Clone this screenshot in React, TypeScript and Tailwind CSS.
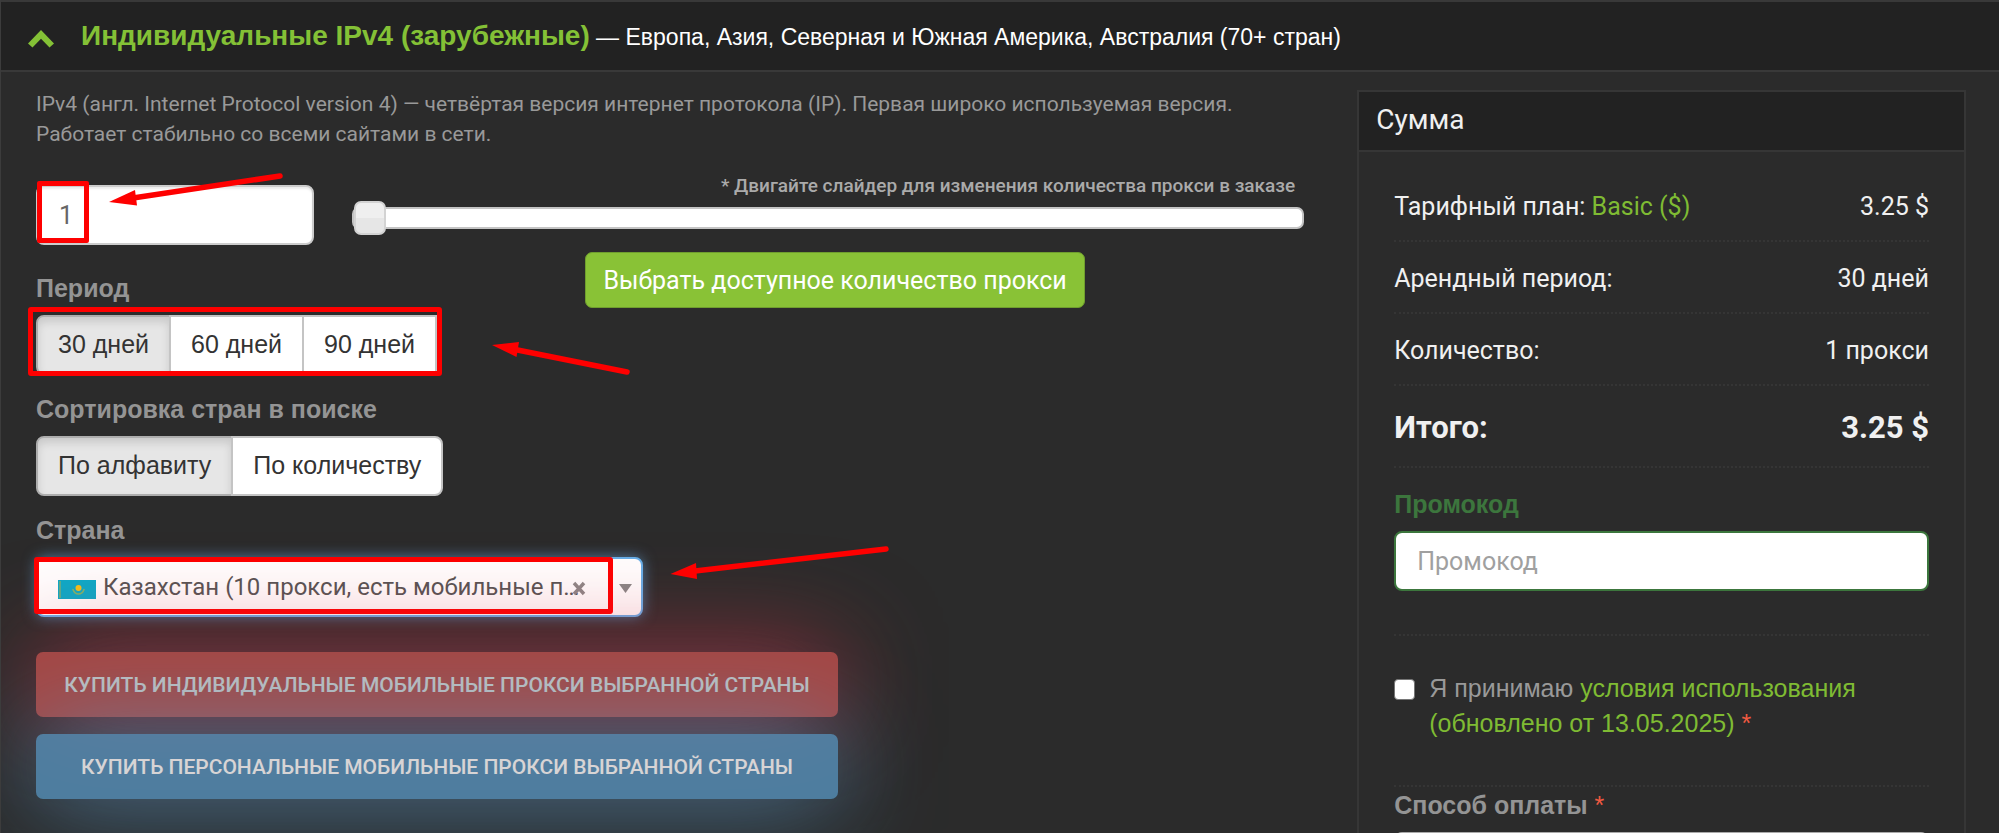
import { useState, type ReactNode } from "react";

function FieldLabel({ htmlFor, children }: { htmlFor?: string; children: ReactNode }) {
  return (
    <label
      htmlFor={htmlFor}
      className="mb-[13px] block whitespace-nowrap font-['Liberation_Sans',sans-serif] text-[25px] leading-7 font-bold text-[#949494]"
    >
      {children}
    </label>
  );
}

function SegmentedControl({
  label,
  options,
  marked = false,
}: {
  label: string;
  options: string[];
  marked?: boolean;
}) {
  const [active, setActive] = useState(options[0]);
  return (
    <div role="group" aria-label={label} className="relative flex w-max">
      {options.map((option) => (
        <button
          key={option}
          type="button"
          aria-pressed={option === active}
          onClick={() => setActive(option)}
          className="-ml-[2px] h-[60px] border-2 border-[#c4c4c4] bg-white px-5 pb-[2px] font-['Liberation_Sans',sans-serif] text-[25px] leading-7 text-[#333] first:ml-0 first:rounded-l-[8px] last:rounded-r-[8px] aria-pressed:border-[#adadad] aria-pressed:bg-[#e6e6e6] aria-pressed:shadow-[inset_0_5px_9px_rgba(0,0,0,0.125)]"
        >
          {option}
        </button>
      ))}
      {marked && (
        <span className="pointer-events-none absolute -top-2 -right-[5px] -bottom-[1px] -left-2 rounded-[3px] border-[5px] border-[#fe0000]" />
      )}
    </div>
  );
}

function FlagKazakhstan() {
  return (
    <svg viewBox="0 0 38 19" className="h-[19px] w-[38px]" aria-hidden="true">
      <rect width="38" height="19" fill="#0aabc9" />
      <rect x="1" y="1" width="2" height="17" fill="#5cae8c" />
      <circle cx="20.5" cy="8" r="3" fill="#f5c21b" />
      <path
        d="M15 9.500c1 3 3 4.500 5.500 4.500s4.500-1.500 5.500-4.500"
        fill="none"
        stroke="#7fb56b"
        strokeWidth="1.600"
        strokeLinecap="round"
      />
    </svg>
  );
}

function SummaryRow({ name, value }: { name: ReactNode; value: string }) {
  return (
    <div className="flex h-[72px] items-center justify-between border-b-2 border-dotted border-[#353535] pt-[3px]">
      <dt>{name}</dt>
      <dd>{value}</dd>
    </div>
  );
}

function PointerArrows() {
  return (
    <svg
      viewBox="0 0 900 600"
      className="pointer-events-none absolute top-0 left-0 h-[600px] w-[900px]"
      aria-hidden="true"
      fill="#fe0000"
      stroke="#fe0000"
      strokeLinecap="round"
    >
      <path d="M279 176L132 198" strokeWidth="5.500" />
      <path d="M108 202L134 190L136 205.500Z" stroke="none" />
      <path d="M626 372L514 349.500" strokeWidth="5.500" />
      <path d="M491 345L518 342L515.500 357Z" stroke="none" />
      <path d="M885 549L694 571" strokeWidth="5.500" />
      <path d="M669.500 574L695 563L696 579Z" stroke="none" />
    </svg>
  );
}

export default function App() {
  const [count, setCount] = useState(1);

  return (
    <div className="relative h-screen overflow-hidden border-l border-[#3c3c3c] bg-[#2b2b2b] font-['Roboto',sans-serif] text-[25px] leading-[30px] text-[#999]">
      <header className="flex h-[72px] items-center border-y-2 border-[#393939] bg-[#222] pl-[27px] font-['Liberation_Sans',sans-serif]">
        <button type="button" aria-label="Свернуть" className="mt-[5px] mr-[27px] w-[26px]">
          <svg viewBox="0 0 26 18" className="h-[18px] w-[26px]" aria-hidden="true">
            <path d="M13 0L26 13.500L21.500 17.500L13 8.800L4.500 17.500L0 13.500Z" fill="#84c136" />
          </svg>
        </button>
        <h1 className="text-[23px] leading-8 whitespace-nowrap text-white">
          <strong className="text-[28px] font-bold text-[#84c136]">Индивидуальные IPv4 (зарубежные)</strong> — Европа,
          Азия, Северная и Южная Америка, Австралия (70+ стран)
        </h1>
      </header>

      <main className="grid grid-cols-[minmax(0,25fr)_minmax(0,12fr)] items-start gap-x-[53px] pr-[33px] pl-[35px]">
        <form className="pt-[17px]">
          <p className="text-[21px] leading-[30px]">
            IPv4 (англ. Internet Protocol version 4) — четвёртая версия интернет протокола (IP). Первая широко
            используемая версия.
            <br />
            Работает стабильно со всеми сайтами в сети.
          </p>

          <div className="mt-6 flex items-start gap-[38px]">
            <div className="w-[278px] shrink-0 pt-3">
              <div className="relative mb-[29px]">
                <input
                  type="text"
                  aria-label="Количество прокси"
                  value={count}
                  onChange={(e) => setCount(Number(e.target.value) || 1)}
                  className="block h-[60px] w-full rounded-[8px] border-2 border-[#ccc] bg-white px-[21px] text-[25px] text-[#666] shadow-[inset_0_2px_2px_rgba(0,0,0,0.075)]"
                />
                <span className="pointer-events-none absolute -top-1 left-[1px] h-[62px] w-[52px] rounded-[2px] border-[5px] border-[#fe0000]" />
              </div>
              <FieldLabel>Период</FieldLabel>
              <SegmentedControl label="Период" options={["30 дней", "60 дней", "90 дней"]} marked />
            </div>

            <div className="flex min-w-0 flex-1 flex-col">
              <label
                htmlFor="amount"
                className="pr-[9px] text-right text-[19px] leading-[26px] font-medium text-[#aaa]"
              >
                * Двигайте слайдер для изменения количества прокси в заказе
              </label>
              <input
                id="amount"
                type="range"
                min={1}
                max={100}
                value={count}
                onChange={(e) => setCount(Number(e.target.value))}
                className="mt-[2px] block h-[34px] w-full appearance-none bg-transparent [&::-webkit-slider-runnable-track]:box-border [&::-webkit-slider-runnable-track]:h-[22px] [&::-webkit-slider-runnable-track]:rounded-[7px] [&::-webkit-slider-runnable-track]:border-2 [&::-webkit-slider-runnable-track]:border-[#c4c4c4] [&::-webkit-slider-runnable-track]:bg-white [&::-webkit-slider-thumb]:-mt-2 [&::-webkit-slider-thumb]:box-border [&::-webkit-slider-thumb]:h-[34px] [&::-webkit-slider-thumb]:w-8 [&::-webkit-slider-thumb]:appearance-none [&::-webkit-slider-thumb]:rounded-[7px] [&::-webkit-slider-thumb]:border-2 [&::-webkit-slider-thumb]:border-[#d3d3d3] [&::-webkit-slider-thumb]:bg-[linear-gradient(#efefef_50%,#e6e6e6_50%)]"
              />
              <div className="mt-[17px] flex justify-center pl-[14px]">
                <button
                  type="button"
                  className="h-14 rounded-[7px] border border-[#6f9e2e] bg-[#89c236] px-[17px] pt-[2px] text-[25px] whitespace-nowrap text-white"
                >
                  Выбрать доступное количество прокси
                </button>
              </div>
            </div>
          </div>

          <div className="mt-5">
            <FieldLabel>Сортировка стран в поиске</FieldLabel>
            <SegmentedControl label="Сортировка стран в поиске" options={["По алфавиту", "По количеству"]} />
          </div>

          <div className="mt-5">
            <FieldLabel htmlFor="country">Страна</FieldLabel>
            <div className="relative h-[60px] w-[607px]">
              <select
                id="country"
                className="block h-full w-full appearance-none rounded-[8px] border-2 border-[#66afe9] bg-white pr-0 pl-[65px] text-[24px] text-[#555] shadow-[0_0_14px_rgba(102,175,233,0.600)]"
              >
                <option>Казахстан (10 прокси, есть мобильные п…</option>
              </select>
              <span className="pointer-events-none absolute top-[23px] left-[22px]">
                <FlagKazakhstan />
              </span>
              <button type="button" aria-label="Очистить" className="absolute top-[24px] left-[536px]">
                <svg viewBox="0 0 14 15" className="h-[15px] w-[14px]" aria-hidden="true">
                  <path d="M2 2L12 13M12 2L2 13" stroke="#8c8888" strokeWidth="3.400" />
                </svg>
              </button>
              <svg
                viewBox="0 0 13 9"
                className="pointer-events-none absolute top-[27px] left-[583px] h-[9px] w-[13px]"
                aria-hidden="true"
              >
                <path d="M0 0H13L6.500 9Z" fill="#888" />
              </svg>
              <span className="pointer-events-none absolute top-0 -left-[2px] h-[57px] w-[579px] rounded-[3px] border-[5px] border-[#fe0000]" />
            </div>
          </div>

          <div className="mt-[35px] flex w-[802px] flex-col gap-[17px] text-[21px] font-medium">
            <button
              type="button"
              className="h-[65px] rounded-[7px] bg-[#d9534f] text-white uppercase opacity-70 shadow-[0_0_100px_#d93246]"
            >
              Купить индивидуальные мобильные прокси выбранной страны
            </button>
            <button
              type="button"
              className="h-[65px] rounded-[7px] bg-[#5692bc] text-white uppercase opacity-80 shadow-[0_0_100px_#5698c4]"
            >
              Купить персональные мобильные прокси выбранной страны
            </button>
          </div>
        </form>

        <aside className="mt-[18px] border-2 border-[#363636]">
          <h2 className="border-b-2 border-[#363636] bg-[#222] pt-3 pb-[14px] pl-[17px] text-[28px] leading-8 text-[#f0f0f0]">
            Сумма
          </h2>
          <div className="px-[35px] pt-[18px]">
            <dl className="text-[#f0f0f0]">
              <SummaryRow
                name={
                  <>
                    Тарифный план:{" "}
                    <a href="#plan" className="text-[#7fbb33]">
                      Basic ($)
                    </a>
                  </>
                }
                value="3.25 $"
              />
              <SummaryRow name="Арендный период:" value="30 дней" />
              <SummaryRow name="Количество:" value="1 прокси" />
              <div className="flex h-[82px] items-center justify-between border-b-2 border-dotted border-[#353535] pt-[3px] text-[31px] font-bold">
                <dt>Итого:</dt>
                <dd>3.25 $</dd>
              </div>
            </dl>

            <div className="border-b-2 border-dotted border-[#353535] pt-[22px] pb-[43px]">
              <label
                htmlFor="promo"
                className="mb-[13px] block font-['Liberation_Sans',sans-serif] text-[25px] leading-7 font-bold text-[#3c763d]"
              >
                Промокод
              </label>
              <input
                id="promo"
                type="text"
                placeholder="Промокод"
                className="block h-[60px] w-full rounded-[8px] border-2 border-[#3c763d] bg-white px-[21px] text-[25px] placeholder:text-[#a0a0a0]"
              />
            </div>

            <div className="flex items-start border-b-2 border-dotted border-[#353535] pt-[35px] pb-[44px] font-['Liberation_Sans',sans-serif] leading-[35px]">
              <input
                id="terms"
                type="checkbox"
                className="mt-2 mr-[14px] size-[21px] shrink-0 appearance-none rounded-[4px] border border-[#767676] bg-white checked:bg-[#89c236]"
              />
              <label htmlFor="terms">
                Я принимаю{" "}
                <a href="#terms" className="text-[#7fbb33]">
                  <span>условия использования</span> <span>(обновлено от 13.05.2025)</span>
                </a>{" "}
                <span className="text-[#f05a41]">*</span>
              </label>
            </div>

            <div className="pt-1">
              <FieldLabel htmlFor="payment">
                Способ оплаты <span className="font-normal text-[#f05a41]">*</span>
              </FieldLabel>
              <select
                id="payment"
                className="block h-[60px] w-full appearance-none rounded-[8px] border-2 border-[#aaa] bg-white px-[21px]"
              />
            </div>
          </div>
        </aside>
      </main>

      <PointerArrows />
    </div>
  );
}
